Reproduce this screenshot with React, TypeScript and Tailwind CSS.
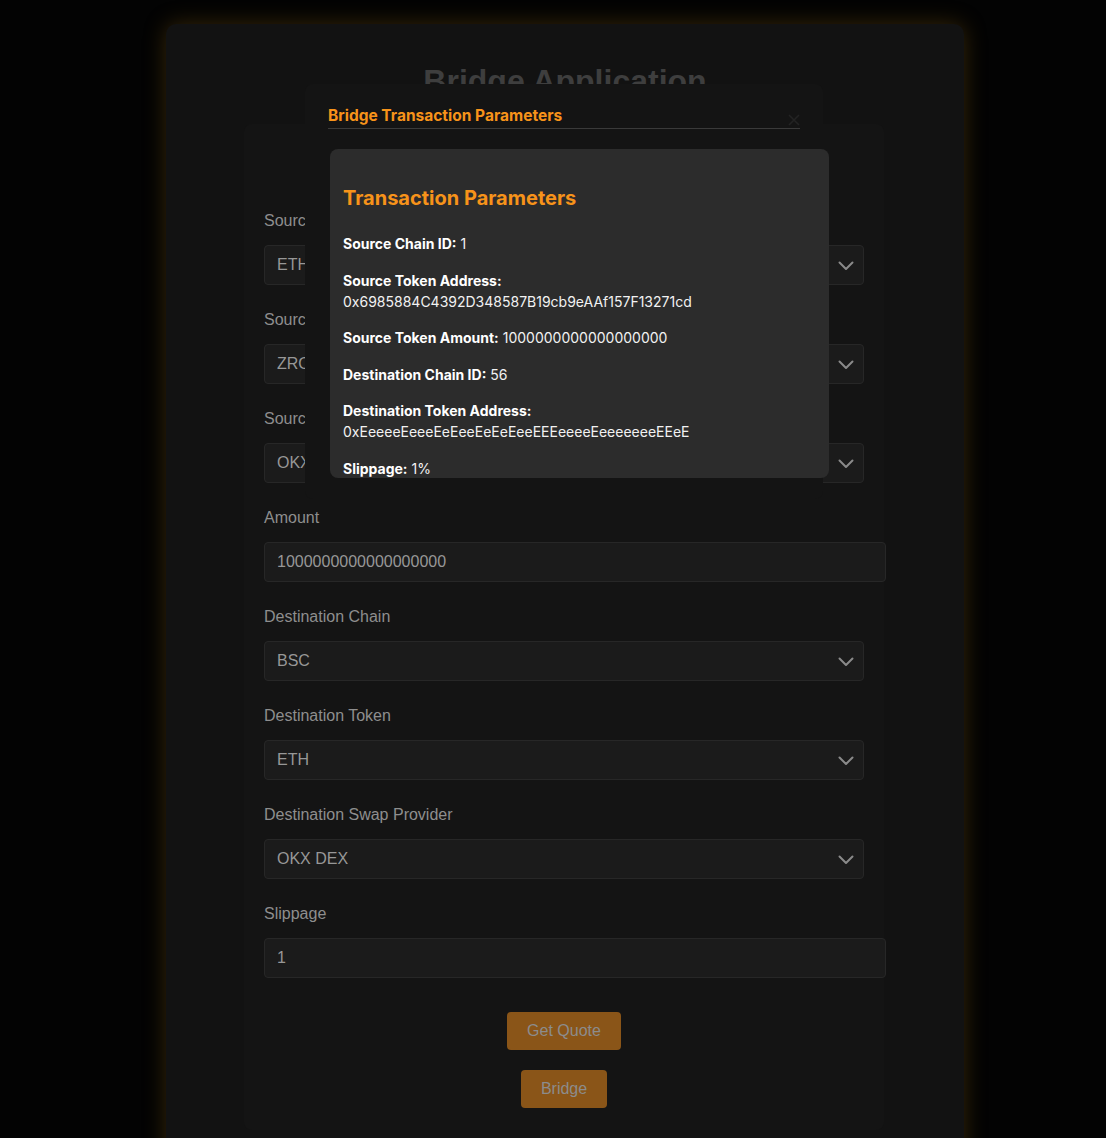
import React from 'react';

const fields = [
  { label: 'Source Chain', value: 'ETH', kind: 'select' },
  { label: 'Source Token', value: 'ZRO', kind: 'select' },
  { label: 'Source Swap Provider', value: 'OKX DEX', kind: 'select' },
  { label: 'Amount', value: '1000000000000000000', kind: 'input' },
  { label: 'Destination Chain', value: 'BSC', kind: 'select' },
  { label: 'Destination Token', value: 'ETH', kind: 'select' },
  { label: 'Destination Swap Provider', value: 'OKX DEX', kind: 'select' },
  { label: 'Slippage', value: '1', kind: 'input' },
];

const params = [
  { k: 'Source Chain ID:', v: '1' },
  { k: 'Source Token Address:', v: '0x6985884C4392D348587B19cb9eAAf157F13271cd', br: true },
  { k: 'Source Token Amount:', v: '1000000000000000000' },
  { k: 'Destination Chain ID:', v: '56' },
  { k: 'Destination Token Address:', v: '0xEeeeeEeeeEeEeeEeEeEeeEEEeeeeEeeeeeeeEEeE', br: true },
  { k: 'Slippage:', v: '1%' },
];

function Chevron() {
  return (
    <svg width="16" height="10" viewBox="0 0 16 10" fill="none" className="absolute right-[9px] top-[15px]">
      <path d="M1.5 1.5 L8 8 L14.5 1.5" stroke="#8a8a8a" strokeWidth="2" strokeLinecap="round" strokeLinejoin="round" />
    </svg>
  );
}

function Field({ label, value, kind }: { label: string; value: string; kind: string }) {
  return (
    <div className="mb-[26px]">
      <div className="text-[16px] leading-[18px] text-[#8e8e8e] mb-[15px]">{label}</div>
      {kind === 'select' ? (
        <div className="relative w-[600px] h-[40px] rounded-[4px] border border-[#272727] bg-[#1b1b1b] flex items-center pl-[12px] text-[16px] text-[#979797]">
          {value}
          <Chevron />
        </div>
      ) : (
        <div className="w-[622px] h-[40px] rounded-[4px] border border-[#272727] bg-[#1b1b1b] flex items-center pl-[12px] text-[16px] text-[#979797]">
          {value}
        </div>
      )}
    </div>
  );
}

export default function App() {
  return (
    <div className="min-h-screen bg-[#030303] pt-[24px] font-['Liberation_Sans',Arial,sans-serif]">
      <div className="ml-[166px] w-[798px] rounded-[10px] bg-[#121212] shadow-[0_0_22px_rgba(150,105,20,0.35)] pb-[40px]">
        <h1 className="pt-[39px] text-center text-[32px] leading-[37px] font-bold text-[#3e3e3e]">Bridge Application</h1>
        <div className="mt-[24px] ml-[78px] w-[640px] rounded-[8px] bg-[#141414] px-[20px] pt-[88px] pb-[22px]">
          {fields.map((f) => (
            <Field key={f.label} {...f} />
          ))}
          <div className="flex flex-col items-center gap-[20px] pt-[8px]">
            <button className="h-[38px] px-[20px] rounded-[4px] bg-[#8a5518] text-[16px] text-[#8c8c8c]">Get Quote</button>
            <button className="h-[38px] px-[20px] rounded-[4px] bg-[#8a5518] text-[16px] text-[#8c8c8c]">Bridge</button>
          </div>
        </div>
      </div>

      <div className="fixed left-[305px] top-[84px] w-[518px] h-[415px] rounded-[8px] bg-[#141414] pt-[20px] pl-[23px] font-['Inter',sans-serif]">
        <div className="relative w-[472px] border-b border-[#3a3a3a]">
          <h2 className="text-[15.5px] leading-[24px] font-bold text-[#f7931a]">Bridge Transaction Parameters</h2>
          <svg width="12" height="12" viewBox="0 0 12 12" className="absolute right-0 top-[10px]">
            <path d="M1 1 L11 11 M11 1 L1 11" stroke="#232323" strokeWidth="1.6" />
          </svg>
        </div>
        <div className="mt-[20px] ml-[2px] w-[499px] h-[329px] overflow-hidden rounded-[8px] bg-[#2c2c2c] px-[13px] pt-[37px]">
          <h3 className="text-[20px] leading-[24px] font-bold text-[#f7931a]">Transaction Parameters</h3>
          <div className="mt-[23px] flex flex-col gap-[15.5px] text-[14px] leading-[21px] text-[#f2f2f2]">
            {params.map((p) => (
              <p key={p.k}>
                <span className="font-bold text-white">{p.k}</span>
                {p.br ? <br /> : ' '}
                {p.v}
              </p>
            ))}
          </div>
        </div>
      </div>
    </div>
  );
}
